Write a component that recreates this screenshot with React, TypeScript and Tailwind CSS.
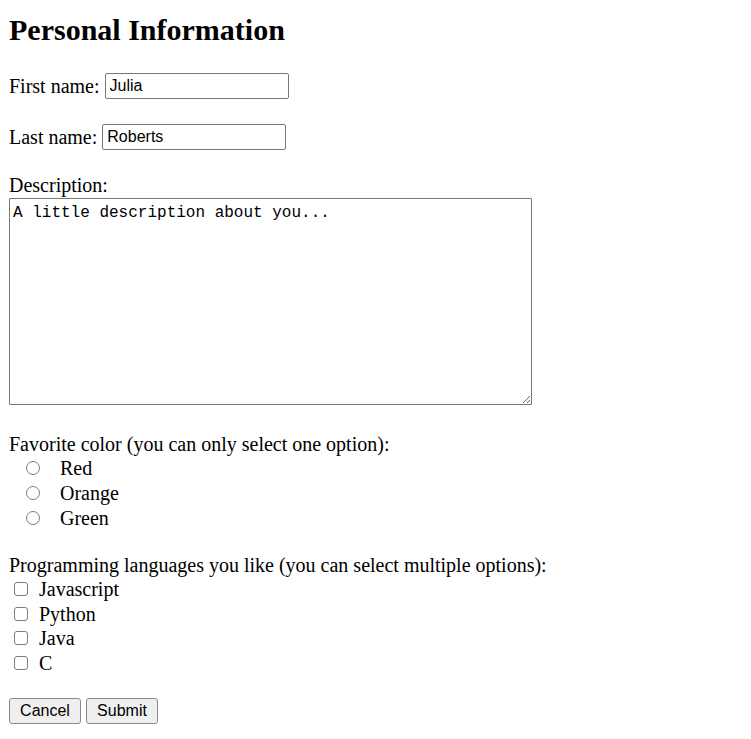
import React from "react";

const serif = { fontFamily: '"Liberation Serif", "Times New Roman", serif' };

function Radio({ label }: { label: string }) {
  return (
    <div className="flex h-[25px] items-start">
      <span className="ml-[17px] mt-[4px] box-border h-[14px] w-[14px] shrink-0 rounded-full border border-[#7d7d7d] bg-white" />
      <span className="-mt-[1px] ml-[20px] leading-[25px]">{label}</span>
    </div>
  );
}

function Check({ label }: { label: string }) {
  return (
    <div className="flex h-[24.5px] items-start">
      <span className="ml-[5px] mt-[4px] box-border h-[14px] w-[14px] shrink-0 rounded-[3px] border border-[#7d7d7d] bg-white" />
      <span className="-mt-[1px] ml-[11px] leading-[24.5px]">{label}</span>
    </div>
  );
}

export default function App() {
  return (
    <div className="min-h-[739px] bg-white px-[9px] text-[20px] text-black" style={serif}>
      <div className="pt-[12px]">
        <h1 className="m-0 text-[30px] font-bold leading-[36px]">Personal Information</h1>
        <div className="mt-[25px] flex h-[26px] items-center gap-[5px]">
          <span className="leading-[25px]">First name:</span>
          <input
            defaultValue="Julia"
            className="box-border h-[26px] w-[184px] rounded-[2px] border border-[#767676] bg-white px-[4px] text-[16px] text-black outline-none"
            style={{ fontFamily: '"Liberation Sans", Arial, sans-serif' }}
          />
        </div>
        <div className="mt-[25px] flex h-[26px] items-center gap-[5px]">
          <span className="leading-[25px]">Last name:</span>
          <input
            defaultValue="Roberts"
            className="box-border h-[26px] w-[184px] rounded-[2px] border border-[#767676] bg-white px-[4px] text-[16px] text-black outline-none"
            style={{ fontFamily: '"Liberation Sans", Arial, sans-serif' }}
          />
        </div>
        <div className="mt-[23px] leading-[25px]">Description:</div>
        <textarea
          defaultValue="A little description about you..."
          className="box-border block h-[207px] w-[523px] resize rounded-[1px] border border-[#767676] bg-white pl-[3px] pt-[5px] text-[16px] leading-[18px] text-black outline-none"
          style={{ fontFamily: '"Liberation Mono", "Courier New", monospace' }}
        />
        <div className="mt-[27px] leading-[25px]">Favorite color (you can only select one option):</div>
        <Radio label="Red" />
        <Radio label="Orange" />
        <Radio label="Green" />
        <div className="mt-[21px] leading-[25px]">
          Programming languages you like (you can select multiple options):
        </div>
        <Check label="Javascript" />
        <Check label="Python" />
        <Check label="Java" />
        <Check label="C" />
        <div
          className="mt-[22px] flex gap-[5px] text-[16px]"
          style={{ fontFamily: '"Liberation Sans", Arial, sans-serif' }}
        >
          <button className="box-border h-[26px] w-[72px] rounded-[3px] border border-[#8a8a8a] bg-[#efefef] pb-[1px] text-black">
            Cancel
          </button>
          <button className="box-border h-[26px] w-[72px] rounded-[3px] border border-[#8a8a8a] bg-[#efefef] pb-[1px] text-black">
            Submit
          </button>
        </div>
      </div>
    </div>
  );
}
